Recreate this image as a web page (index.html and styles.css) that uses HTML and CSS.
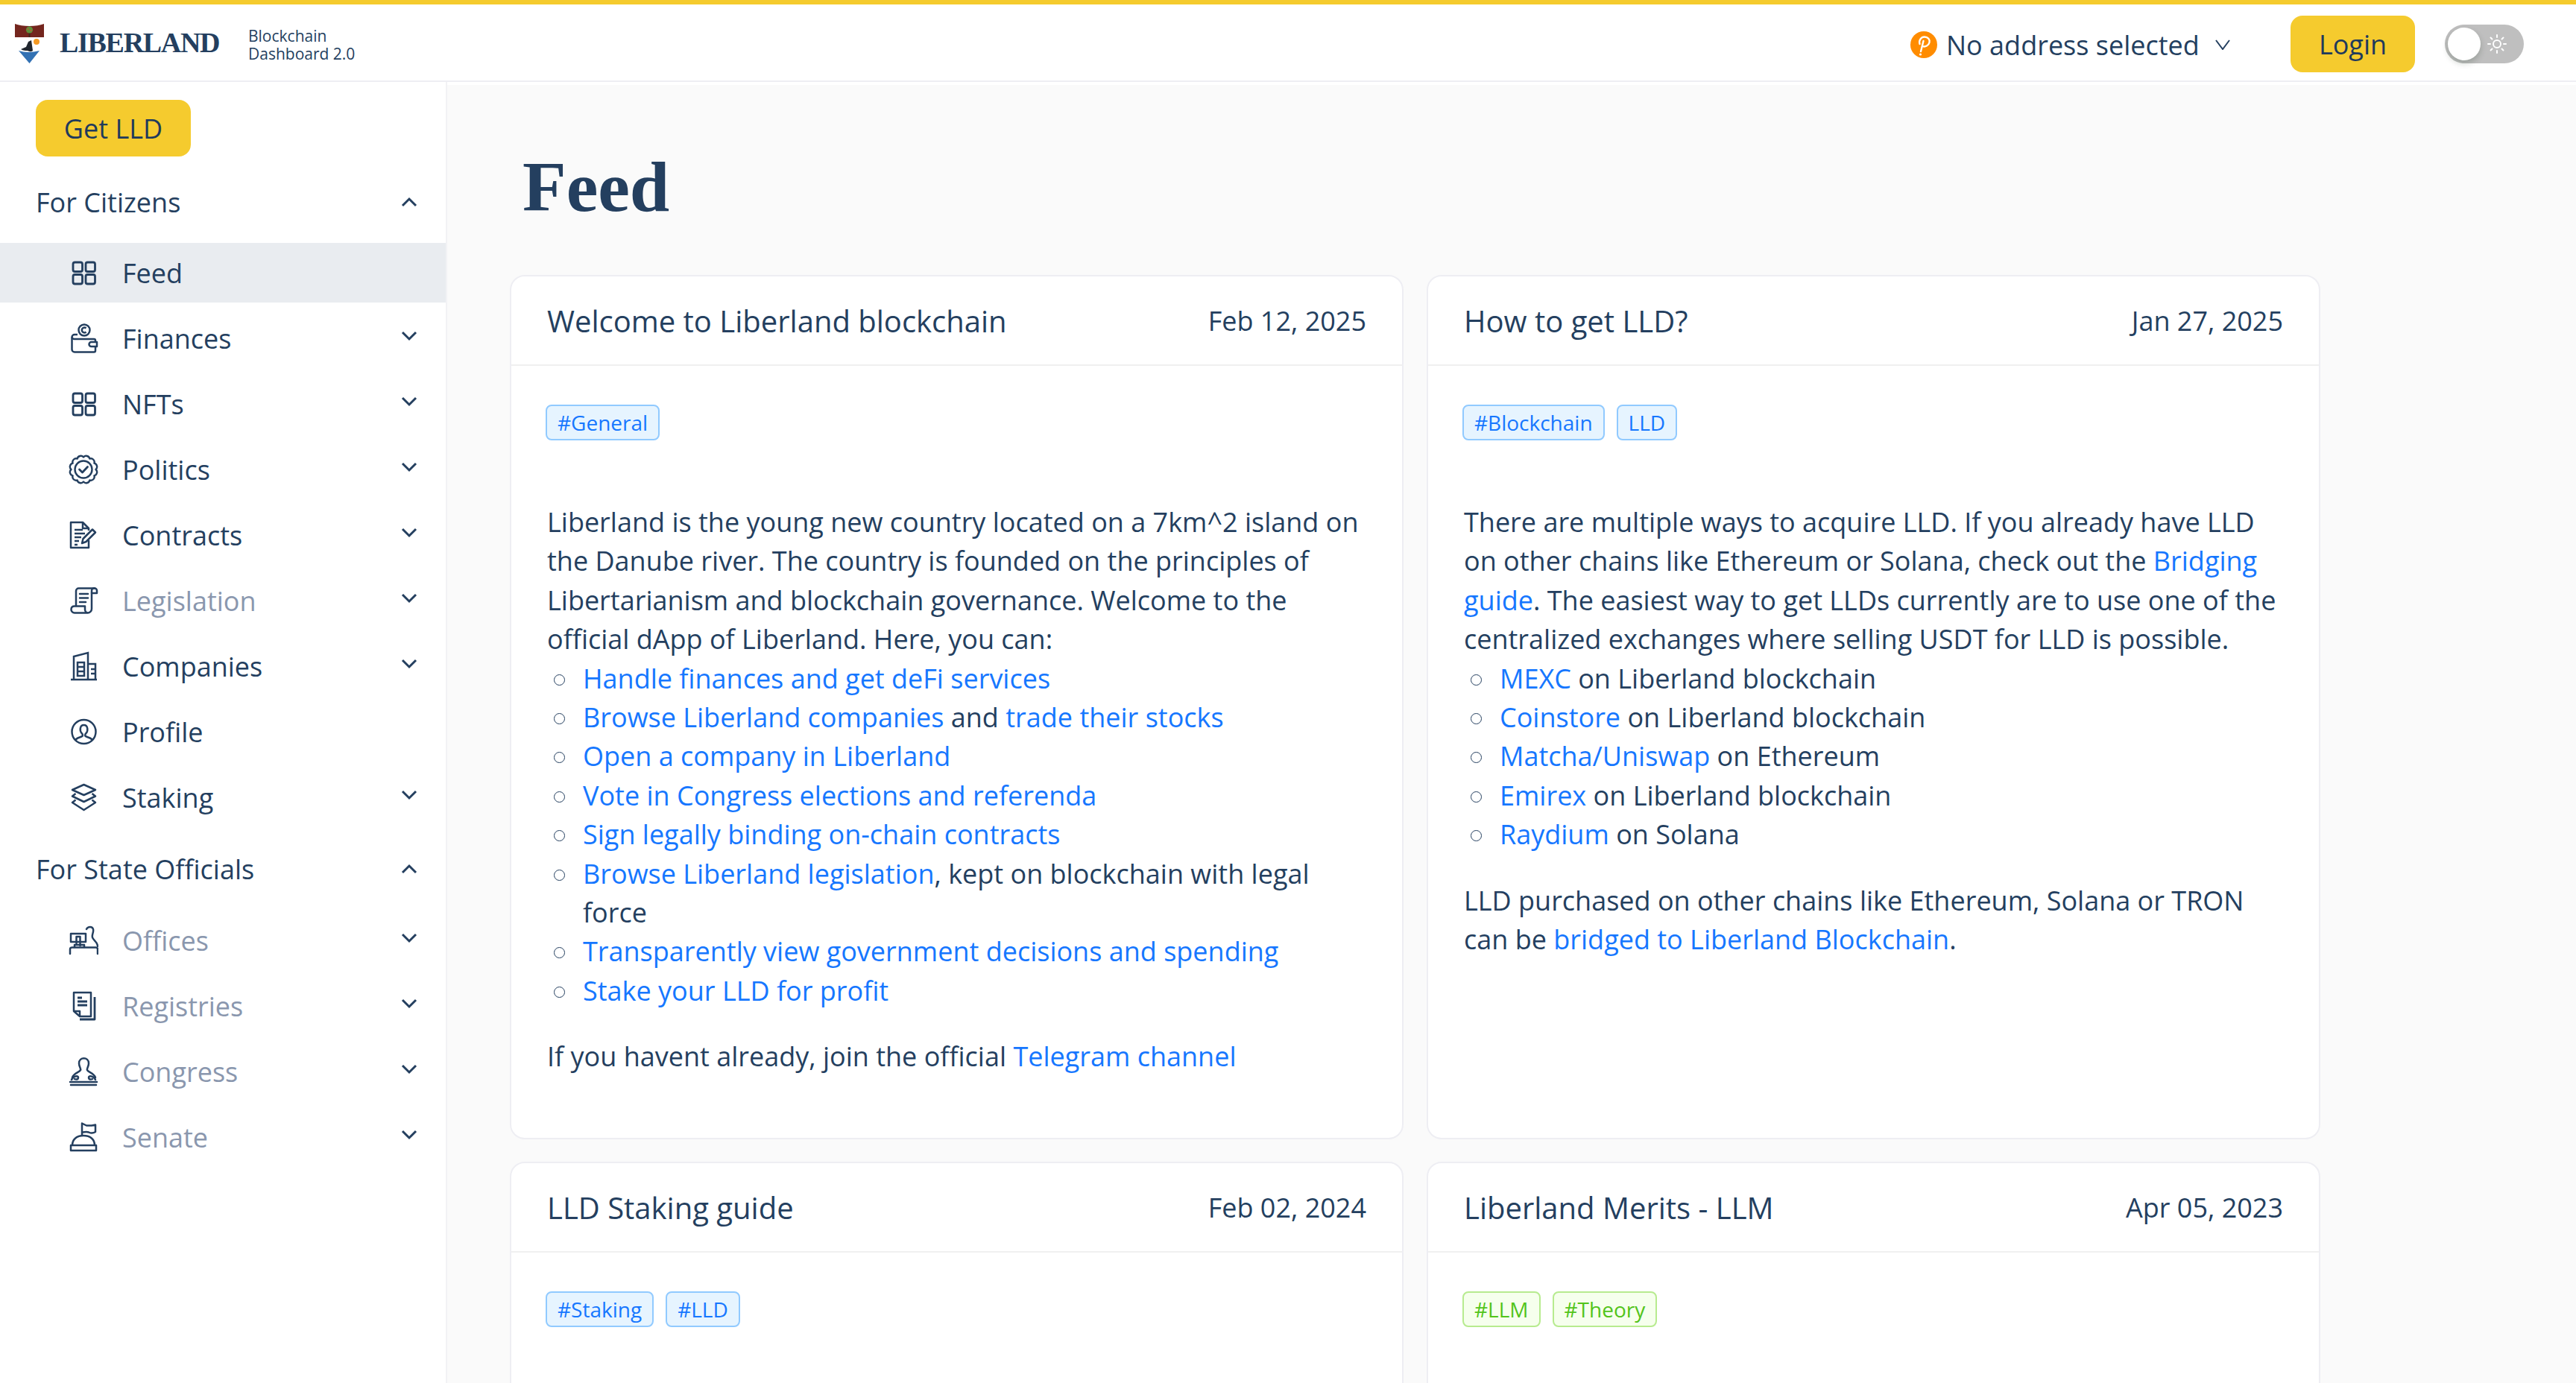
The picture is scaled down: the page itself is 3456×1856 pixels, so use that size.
FILE: index.html
```html
<!DOCTYPE html>
<html lang="en">
<head>
  <meta charset="UTF-8">
  <title>Liberland Blockchain Dashboard</title>
  <link rel="stylesheet" href="styles.css">
</head>
<body>

<svg class="icon-defs" width="0" height="0">
  <defs>
    <symbol id="i-grid" viewBox="0 0 40 40"><g fill="none" stroke="currentColor" stroke-width="2.8"><rect x="6" y="6" width="12.500" height="12.500" rx="2.500"/><rect x="23" y="6" width="12.500" height="12.500" rx="2.500"/><rect x="6" y="22.500" width="12.500" height="12.500" rx="2.500"/><rect x="23" y="22.500" width="12.500" height="12.500" rx="2.500"/></g></symbol>
    <symbol id="i-wallet" viewBox="0 0 40 40"><g fill="none" stroke="currentColor" stroke-width="2.500" stroke-linejoin="round"><circle cx="21" cy="9" r="7.500"/><path d="M23.500 6.500a3.400 3.400 0 1 0 0 5"/><path d="M12 15H8a3.500 3.500 0 0 0-3.500 3.500V35A3.500 3.500 0 0 0 8 38.500h26a2 2 0 0 0 2-2V31"/><path d="M4.500 18.500A3.500 3.500 0 0 0 8 21h26a2 2 0 0 1 2 2v2"/><path d="M38 25h-7.500a3 3 0 0 0 0 6H38z"/></g></symbol>
    <symbol id="i-badge" viewBox="0 0 40 40"><g fill="none" stroke="currentColor" stroke-width="2.400" stroke-linejoin="round" stroke-linecap="round"><path d="M20 3.500A4.800 4.800 0 0 1 28.300 5.600A4.800 4.800 0 0 1 34.400 11.700A4.800 4.800 0 0 1 36.500 20A4.800 4.800 0 0 1 34.400 28.300A4.800 4.800 0 0 1 28.300 34.400A4.800 4.800 0 0 1 20 36.500A4.800 4.800 0 0 1 11.700 34.400A4.800 4.800 0 0 1 5.600 28.300A4.800 4.800 0 0 1 3.500 20A4.800 4.800 0 0 1 5.600 11.700A4.800 4.800 0 0 1 11.700 5.600A4.800 4.800 0 0 1 20 3.500z"/><circle cx="20" cy="20" r="11.500"/><path d="M14.500 20l4 4 7-7.500" stroke-width="2.800"/></g></symbol>
    <symbol id="i-contract" viewBox="0 0 40 40"><g fill="none" stroke="currentColor" stroke-width="2.500" stroke-linejoin="round"><path d="M27 27v10H3V3h16l8 8v3"/><path d="M19 3v8h8"/><path d="M8 13h11M8 18h14M8 23h9M8 28h6M8 33h4"/><path d="M18 31l1.500-6L32 12.500l4 4L23.500 29z"/></g></symbol>
    <symbol id="i-scroll" viewBox="0 0 40 40"><g fill="none" stroke="currentColor" stroke-width="2.500" stroke-linejoin="round" stroke-linecap="round"><path d="M10 27V7a3.500 3.500 0 0 1 3.500-3.500H35"/><path d="M35 3.500a3 3 0 0 1 3 3V10h-7V6.500a3 3 0 0 1 3-3"/><path d="M31 10v21a5.500 5.500 0 0 1-5.500 5.500H8A4.500 4.500 0 0 1 3.500 32c0-2.500 1.500-4.500 4.500-4.500h14V32a4.500 4.500 0 0 0 4 4.500"/><path d="M15 11h11M15 16.500h11M15 22h8"/></g></symbol>
    <symbol id="i-building" viewBox="0 0 40 40"><g fill="none" stroke="currentColor" stroke-width="2.500" stroke-linejoin="miter"><path d="M3 38h35"/><path d="M7 38V7l19-5v36"/><path d="M26 17h10v21"/><path d="M12 15h9v6h-9zM12 21h9v6h-9zM12 27h9v6h-9z"/><path d="M30 24h6M30 30h6"/></g></symbol>
    <symbol id="i-profile" viewBox="0 0 40 40"><g fill="none" stroke="currentColor" stroke-width="2.500"><circle cx="20.500" cy="20" r="16"/><path d="M9 32c1-5 9-4 10-7 .4-1-.4-2-1.400-3-3-3.500-2.600-11 2.900-11s6 7.500 3 11c-1 1-1.800 2-1.400 3 1 3 9 2 10 7"/></g></symbol>
    <symbol id="i-layers" viewBox="0 0 40 40"><g fill="none" stroke="currentColor" stroke-width="2.500" stroke-linejoin="round"><path d="M20.500 3L36 10l-15.500 7L5 10z"/><path d="M9.500 15L5 18.500 20.500 26 36 18.500 31.500 15"/><path d="M9.500 23.500L5 27l15.500 10L36 27l-4.500-3.500"/></g></symbol>
    <symbol id="i-office" viewBox="0 0 40 40"><g fill="none" stroke="currentColor" stroke-width="2.500" stroke-linejoin="round" stroke-linecap="round"><path d="M3 11h20v11H3z"/><path d="M10.500 24V15h5v12"/><path d="M24 5c2-4 8-4 9 0s-2 7-1 11 7 6 7 12"/><path d="M2 38v-6c0-1.500 1-2.500 2.500-2.500h32c1.500 0 2.500 1 2.500 2.500v6"/><path d="M8 29v-3h13v3"/></g></symbol>
    <symbol id="i-registry" viewBox="0 0 40 40"><g fill="none" stroke="currentColor" stroke-width="2.500" stroke-linejoin="round"><path d="M7 2h23v32H15l-8-7z"/><path d="M7 27h8v7"/><path d="M12 9h6M12 14h13M12 19h13" stroke-width="2.800"/><path d="M35 8v30H15" stroke-width="2.800"/></g></symbol>
    <symbol id="i-congress" viewBox="0 0 40 40"><g fill="none" stroke="currentColor" stroke-width="2.500" stroke-linecap="round"><path d="M16 18c1-2-2-4-2-9 0-9 13-9 13 0 0 5-3 7-2 9 1 3 9 4 11 10"/><path d="M16 18c-1 3-9 4-11 10"/><path d="M4 31c2-5 9-6 9-3s-3 3-5 2M36 31c-2-5-9-6-9-3s3 3 5 2"/><path d="M2 34h36M3 38h34"/></g></symbol>
    <symbol id="i-senate" viewBox="0 0 40 40"><g fill="none" stroke="currentColor" stroke-width="2.500" stroke-linejoin="round"><path d="M18 18V1.500l6 3 7 0 5-1v9.500c-3 2-7 1.500-9 .5-3-1-6 0-9 0"/><path d="M5 31c0-8 6-13 15-13s15 5 15 13"/><path d="M3 31h34v7H3z"/></g></symbol>
    <symbol id="i-down" viewBox="0 0 22 14"><path d="M2 2l9 9 9-9" fill="none" stroke="currentColor" stroke-width="3"/></symbol>
    <symbol id="i-up" viewBox="0 0 22 14"><path d="M2 12l9-9 9 9" fill="none" stroke="currentColor" stroke-width="3"/></symbol>
  </defs>
</svg>

<header class="topbar">
  <div class="brand">
    <svg class="crest" viewBox="0 0 40 54">
      <path d="M0 0c10 4 29 4 39 0v18H0z" fill="#74261e"/>
      <path d="M18.500 9h2v9h-2z" fill="#3f2a1c"/>
      <circle cx="19.500" cy="8" r="4.600" fill="#5f8f3a"/>
      <circle cx="17.500" cy="7" r="1" fill="#c8553a"/>
      <circle cx="21.500" cy="9" r="1" fill="#c8553a"/>
      <circle cx="29" cy="24" r="4" fill="#f59a23"/>
      <path d="M8 34l7-3 3-7 4-2 2 14c-3 2-5 1-7 0-3 0-6 0-9-2z" fill="#20262e"/>
      <path d="M5 36c4 1 8 2 13 2 5 0 10-1 15-2L19.500 53z" fill="#3271b3"/>
    </svg>
    <span class="wordmark">LIBERLAND</span>
    <span class="brand-sub">Blockchain<br>Dashboard 2.0</span>
  </div>
  <div class="topbar-right">
    <div class="address">
      <svg class="polkadot" viewBox="0 0 36 36">
        <circle cx="18" cy="18" r="18" fill="#ff8c00"/>
        <path d="M12.500 17c-1.500-5 2-9.500 6.500-9.500s7.500 3.500 6.500 7.500-5.500 6.500-9 5M17.500 13l-3.500 14" fill="none" stroke="#fff" stroke-width="2.400" stroke-linecap="round"/>
        <circle cx="13.500" cy="31" r="1.600" fill="#fff"/>
      </svg>
      <span>No address selected</span>
      <svg class="address-caret" viewBox="0 0 20 14"><path d="M1 1l9 12 9-12" fill="none" stroke="currentColor" stroke-width="2"/></svg>
    </div>
    <button class="btn btn-login">Login</button>
    <div class="toggle">
      <span class="toggle-knob"></span>
      <svg class="toggle-sun" viewBox="0 0 28 28"><g fill="none" stroke="#fff" stroke-width="2" stroke-linecap="round"><circle cx="14" cy="14" r="5"/><path d="M14 2v3M14 23v3M2 14h3M23 14h3M5.500 5.500l2 2M20.500 20.500l2 2M5.500 22.500l2-2M20.500 7.500l2-2"/></g></svg>
    </div>
  </div>
</header>

<div class="layout">
  <nav class="sidebar">
    <button class="btn btn-get">Get LLD</button>

    <div class="group-head">For Citizens <svg class="chev"><use href="#i-up"/></svg></div>
    <ul class="menu">
      <li class="menu-item active"><svg class="menu-icon"><use href="#i-grid"/></svg><span>Feed</span></li>
      <li class="menu-item"><svg class="menu-icon"><use href="#i-wallet"/></svg><span>Finances</span><svg class="chev"><use href="#i-down"/></svg></li>
      <li class="menu-item"><svg class="menu-icon"><use href="#i-grid"/></svg><span>NFTs</span><svg class="chev"><use href="#i-down"/></svg></li>
      <li class="menu-item"><svg class="menu-icon"><use href="#i-badge"/></svg><span>Politics</span><svg class="chev"><use href="#i-down"/></svg></li>
      <li class="menu-item"><svg class="menu-icon"><use href="#i-contract"/></svg><span>Contracts</span><svg class="chev"><use href="#i-down"/></svg></li>
      <li class="menu-item muted"><svg class="menu-icon"><use href="#i-scroll"/></svg><span>Legislation</span><svg class="chev"><use href="#i-down"/></svg></li>
      <li class="menu-item"><svg class="menu-icon"><use href="#i-building"/></svg><span>Companies</span><svg class="chev"><use href="#i-down"/></svg></li>
      <li class="menu-item"><svg class="menu-icon"><use href="#i-profile"/></svg><span>Profile</span></li>
      <li class="menu-item"><svg class="menu-icon"><use href="#i-layers"/></svg><span>Staking</span><svg class="chev"><use href="#i-down"/></svg></li>
    </ul>

    <div class="group-head">For State Officials <svg class="chev"><use href="#i-up"/></svg></div>
    <ul class="menu menu-state">
      <li class="menu-item muted"><svg class="menu-icon"><use href="#i-office"/></svg><span>Offices</span><svg class="chev"><use href="#i-down"/></svg></li>
      <li class="menu-item muted"><svg class="menu-icon"><use href="#i-registry"/></svg><span>Registries</span><svg class="chev"><use href="#i-down"/></svg></li>
      <li class="menu-item muted"><svg class="menu-icon"><use href="#i-congress"/></svg><span>Congress</span><svg class="chev"><use href="#i-down"/></svg></li>
      <li class="menu-item muted"><svg class="menu-icon"><use href="#i-senate"/></svg><span>Senate</span><svg class="chev"><use href="#i-down"/></svg></li>
    </ul>
  </nav>

  <main class="content">
    <h1 class="page-title">Feed</h1>
    <div class="feed">
      <article class="card">
        <div class="card-head"><h2>Welcome to Liberland blockchain</h2><span>Feb 12, 2025</span></div>
        <div class="card-body">
          <div class="tags"><span class="tag">#General</span></div>
          <p>Liberland is the young new country located on a 7km^2 island on the Danube river. The country is founded on the principles of Libertarianism and blockchain governance. Welcome to the official dApp of Liberland. Here, you can:</p>
          <ul class="links">
            <li><a href="#">Handle finances and get deFi services</a></li>
            <li><a href="#">Browse Liberland companies</a> and <a href="#">trade their stocks</a></li>
            <li><a href="#">Open a company in Liberland</a></li>
            <li><a href="#">Vote in Congress elections and referenda</a></li>
            <li><a href="#">Sign legally binding on-chain contracts</a></li>
            <li><a href="#">Browse Liberland legislation</a>, kept on blockchain with legal force</li>
            <li><a href="#">Transparently view government decisions and spending</a></li>
            <li><a href="#">Stake your LLD for profit</a></li>
          </ul>
          <p>If you havent already, join the official <a href="#">Telegram channel</a></p>
        </div>
      </article>

      <article class="card">
        <div class="card-head"><h2>How to get LLD?</h2><span>Jan 27, 2025</span></div>
        <div class="card-body">
          <div class="tags"><span class="tag">#Blockchain</span><span class="tag">LLD</span></div>
          <p>There are multiple ways to acquire LLD. If you already have LLD on other chains like Ethereum or Solana, check out the <a href="#">Bridging guide</a>. The easiest way to get LLDs currently are to use one of the centralized exchanges where selling USDT for LLD is possible.</p>
          <ul class="links">
            <li><a href="#">MEXC</a> on Liberland blockchain</li>
            <li><a href="#">Coinstore</a> on Liberland blockchain</li>
            <li><a href="#">Matcha/Uniswap</a> on Ethereum</li>
            <li><a href="#">Emirex</a> on Liberland blockchain</li>
            <li><a href="#">Raydium</a> on Solana</li>
          </ul>
          <p>LLD purchased on other chains like Ethereum, Solana or TRON can be <a href="#">bridged to Liberland Blockchain</a>.</p>
        </div>
      </article>

      <article class="card">
        <div class="card-head"><h2>LLD Staking guide</h2><span>Feb 02, 2024</span></div>
        <div class="card-body">
          <div class="tags"><span class="tag">#Staking</span><span class="tag">#LLD</span></div>
        </div>
      </article>

      <article class="card">
        <div class="card-head"><h2>Liberland Merits - LLM</h2><span>Apr 05, 2023</span></div>
        <div class="card-body">
          <div class="tags"><span class="tag tag-green">#LLM</span><span class="tag tag-green">#Theory</span></div>
        </div>
      </article>
    </div>
  </main>
</div>

</body>
</html>
```

FILE: styles.css
```css
* {
  box-sizing: border-box;
}
html, body {
  height: 1856px;
  overflow: hidden;
}
body {
  margin: 0;
  font-family: "Open Sans", sans-serif;
  font-size: 36px;
  color: #243f5f;
  background: #fff;
}
.icon-defs {
  position: absolute;
}
.btn {
  height: 76px;
  border: none;
  border-radius: 16px;
  background: #f5cb2e;
  color: #1f3a5c;
  font-family: inherit;
  font-size: 36px;
}

/* top bar */
.topbar {
  height: 110px;
  border-top: 6px solid #f5cb2e;
  border-bottom: 2px solid #eeeef3;
  display: flex;
  align-items: center;
  justify-content: space-between;
  padding: 4px 70px 0 20px;
}
.brand {
  display: flex;
  align-items: center;
}
.crest {
  width: 40px;
  height: 54px;
}
.wordmark {
  margin: 0 0 4px 20px;
  width: 253px;
  font-family: "Liberation Serif", serif;
  font-weight: 700;
  font-size: 38px;
  letter-spacing: -1.3px;
  color: #243f5f;
}
.brand-sub {
  margin-top: 1px;
  font-size: 21px;
  line-height: 24px;
}
.topbar-right {
  display: flex;
  align-items: center;
}
.address {
  display: flex;
  align-items: center;
  width: 510px;
  margin-top: 2px;
}
.polkadot {
  width: 36px;
  height: 36px;
  margin-right: 12px;
}
.address-caret {
  width: 20px;
  height: 14px;
  margin-left: 21px;
}
.btn-login {
  width: 167px;
}
.toggle {
  position: relative;
  width: 106px;
  height: 52px;
  margin-left: 40px;
  border-radius: 26px;
  background: #bfbfbf;
}
.toggle-knob {
  position: absolute;
  left: 4px;
  top: 4px;
  width: 44px;
  height: 44px;
  border-radius: 50%;
  background: #fff;
  box-shadow: 0 4px 8px rgba(0, 35, 11, 0.2);
}
.toggle-sun {
  position: absolute;
  right: 22px;
  top: 12px;
  width: 28px;
  height: 28px;
}

/* sidebar */
.layout {
  display: flex;
  height: 1746px;
}
.sidebar {
  width: 600px;
  flex: none;
  padding-top: 24px;
  border-right: 2px solid #f2f2f5;
}
.btn-get {
  display: block;
  width: 208px;
  margin-left: 48px;
}
.group-head {
  display: flex;
  align-items: center;
  justify-content: space-between;
  height: 80px;
  margin-top: 21px;
  padding: 0 38px 0 48px;
}
.menu {
  list-style: none;
  margin: 15px 0 0;
  padding: 0;
  display: flex;
  flex-direction: column;
  gap: 8px;
}
.menu-state {
  margin-top: 16px;
}
.menu + .group-head {
  margin-top: 16px;
}
.chev {
  width: 22px;
  height: 14px;
  color: #243f5f;
}
.menu-item {
  height: 80px;
  display: flex;
  align-items: center;
  padding: 0 38px 0 92px;
}
.menu-item span {
  flex: 1;
}
.menu-item .chev {
  margin-top: -6px;
}
.menu-icon {
  width: 40px;
  height: 40px;
  margin-right: 32px;
  color: #243f5f;
}
.menu-item.active {
  background: #e9ecf0;
}
.menu-item.muted span {
  color: #8a97ae;
}

/* feed */
.content {
  flex: 1;
  margin-top: 4px;
  background: #fafafa;
  padding: 77px 0 0 84px;
  overflow: hidden;
}
.page-title {
  margin: 0 0 0 17px;
  font-family: "Liberation Serif", serif;
  font-weight: 700;
  font-size: 96px;
  line-height: 120px;
  color: #243f5f;
}
.feed {
  margin-top: 58px;
  display: grid;
  grid-template-columns: 1199px 1199px;
  grid-auto-rows: 1160px;
  gap: 30px 31px;
}
.card {
  background: #fff;
  border: 2px solid #eeeef3;
  border-radius: 20px;
}
.card-head {
  display: flex;
  align-items: center;
  justify-content: space-between;
  height: 120px;
  padding: 0 48px;
  border-bottom: 2px solid #f0f0f0;
}
.card-head h2 {
  margin: 0;
  font-size: 40px;
  font-weight: 400;
}
.card-body {
  padding: 52px 48px;
  line-height: 52.4px;
}
.tags {
  display: flex;
  gap: 16px;
  margin: 0 0 84px -2px;
}
.tag {
  height: 48px;
  padding: 0 14px;
  border: 2px solid #91caff;
  border-radius: 8px;
  background: #e6f4ff;
  color: #1677ff;
  font-size: 28px;
  line-height: 44px;
}
.tag-green {
  border-color: #b7eb8f;
  background: #f6ffed;
  color: #52c41a;
}
.card-body p {
  margin: 0;
}
.links {
  list-style: none;
  margin: 0 0 36px;
  padding: 0 0 0 48px;
}
.links li {
  position: relative;
}
.links li::before {
  content: "";
  position: absolute;
  left: -39px;
  top: 20px;
  width: 13px;
  height: 13px;
  border: 1.5px solid #243f5f;
  border-radius: 50%;
}
a {
  color: #1677ff;
  text-decoration: none;
}
```
